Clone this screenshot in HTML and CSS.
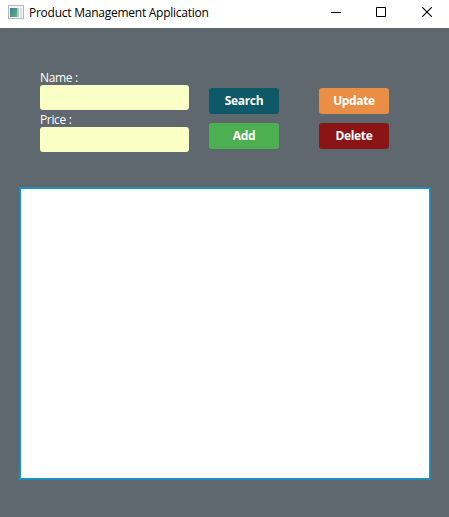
FILE: index.html
```html
<!DOCTYPE html>
<html lang="en">
<head>
<meta charset="utf-8">
<title>Product Management Application</title>
<link rel="stylesheet" href="styles.css">
</head>
<body>
<div class="window">
  <header class="titlebar">
    <svg class="app-icon" width="16" height="14" viewBox="0 0 16 14">
      <defs>
        <linearGradient id="pane" x1="0" y1="0" x2="1" y2="1"><stop offset="0" stop-color="#3f78ae"/><stop offset="1" stop-color="#62b56b"/></linearGradient>
      </defs>
      <rect x=".5" y=".5" width="15" height="13" fill="#f4f4f4" stroke="#b5b7b9"/>
      <rect x="2" y="3" width="7" height="9" fill="url(#pane)"/>
      <rect x="9" y="3" width="2" height="9" fill="#a9c9d6"/>
      <rect x="12" y="3" width="2" height="9" fill="#d5e2e6"/>
    </svg>
    <h1 class="title">Product Management Application</h1>
    <div class="controls">
      <svg width="10" height="10" viewBox="0 0 10 10"><path d="M0 5.5H10" stroke="#000"/></svg>
      <svg width="10" height="10" viewBox="0 0 10 10"><path d="M.5 .5H9.5V9.5H.5Z" fill="none" stroke="#000"/></svg>
      <svg width="10" height="10" viewBox="0 0 10 10"><path d="M.2 .2L9.8 9.8M9.8 .2L.2 9.8" stroke="#000" stroke-width="1.1"/></svg>
    </div>
  </header>
  <main class="content">
    <form class="form">
      <div class="fields">
        <label class="label" for="name">Name :</label>
        <input class="input" id="name" type="text">
        <label class="label" for="price">Price :</label>
        <input class="input" id="price" type="text">
      </div>
      <div class="actions">
        <button class="button search" type="button">Search</button>
        <button class="button update" type="button">Update</button>
        <button class="button add" type="button">Add</button>
        <button class="button delete" type="button">Delete</button>
      </div>
    </form>
    <div class="list"></div>
  </main>
</div>
</body>
</html>
```
FILE: styles.css
```css
* { box-sizing: border-box; }

body {
  margin: 0;
  font: 12px/16px "Open Sans", "Noto Sans", sans-serif;
}

.window {
  height: 517px;
  display: flex;
  flex-direction: column;
  background: #5f686e;
}

.titlebar {
  height: 28px;
  display: flex;
  align-items: flex-start;
  padding: 5px 17px 0 8px;
  background: #fff;
}

.title {
  flex: 1;
  margin: 0 0 0 5px;
  font-size: 12px;
  font-weight: 400;
  line-height: 16px;
  letter-spacing: -0.25px;
  white-space: nowrap;
  color: #000;
}

.controls {
  display: flex;
  gap: 35px;
  margin-right: 0;
  padding-top: 2px;
}

.controls svg { display: block; }

.controls svg:nth-child(-n+2) {
  margin-left: -1px;
  margin-right: 1px;
}

.controls svg:nth-child(2) { margin-left: -1px; }

.content {
  flex: 1;
  padding: 41px 18px 37px 19px;
}

.form {
  display: flex;
  height: 118px;
  padding-left: 21px;
}

.fields { width: 149px; }

.label {
  display: block;
  height: 16px;
  padding-top: 1px;
  line-height: 16px;
  letter-spacing: -0.35px;
  color: #fff;
}

.input {
  display: block;
  width: 149px;
  height: 25px;
  margin-bottom: 1px;
  padding: 0 7px;
  border: 0;
  border-radius: 3px;
  outline: 0;
  background: #faffc5;
}

.actions {
  display: grid;
  grid-template-columns: 70px 70px;
  grid-auto-rows: 26px;
  gap: 9px 40px;
  padding: 19px 0 0 20px;
}

.button {
  padding: 0;
  border: 0;
  border-radius: 3px;
  font: 700 12px/26px "Open Sans", "Noto Sans", sans-serif;
  letter-spacing: -0.35px;
  color: #fff;
}

.search { background: #0d5968; }
.update { background: #ea8e46; }
.add { background: #4caf50; }
.delete { background: #8b1515; }

.list {
  height: 293px;
  border: 1px solid #2f87a8;
  border-radius: 1px;
  background: #fff;
  box-shadow: inset 0 0 0 1px #039ed3;
}
```
